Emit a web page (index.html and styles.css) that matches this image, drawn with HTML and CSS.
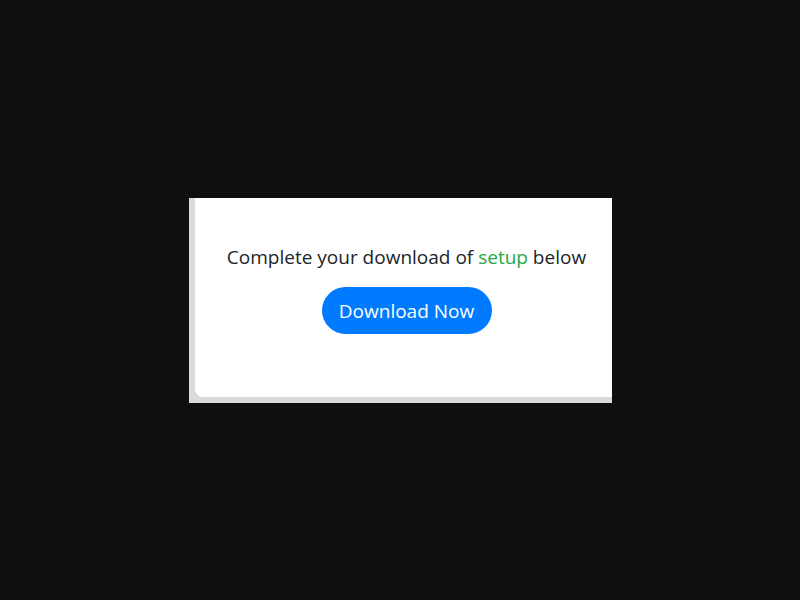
FILE: index.html
```html
<!DOCTYPE html>
<html>
<head>
<meta charset="utf-8">
<link rel="stylesheet" href="styles.css">
</head>
<body>
<div class="page">
  <div class="frame">
    <div class="card">
      <p class="msg">Complete your download of <span class="name">setup</span> below</p>
      <a class="btn" href="#">Download Now</a>
    </div>
  </div>
</div>
</body>
</html>
```

FILE: styles.css
```css
html, body {
  margin: 0;
  padding: 0;
  background: #0f0f0f;
}
.page {
  width: 800px;
  height: 600px;
  padding: 198px 0 0 189px;
  box-sizing: border-box;
}
.frame {
  width: 423px;
  height: 205px;
  background: #dadada;
  overflow: hidden;
}
.card {
  margin-left: 6px;
  width: 423px;
  height: 199px;
  background: #fff;
  border-radius: 0 0 0 8px;
  display: flex;
  flex-direction: column;
  align-items: center;
  padding-top: 47px;
  box-sizing: border-box;
  font-family: "Open Sans", "Noto Sans", sans-serif;
}
.msg {
  margin: 0;
  font-size: 19px;
  line-height: 24px;
  color: #212529;
}
.name {
  color: #28a745;
}
.btn {
  margin-top: 18px;
  display: inline-flex;
  align-items: center;
  justify-content: center;
  width: 170px;
  height: 47px;
  border-radius: 24px;
  background: #007bff;
  color: #fff;
  text-decoration: none;
  font-size: 19px;
}
```
